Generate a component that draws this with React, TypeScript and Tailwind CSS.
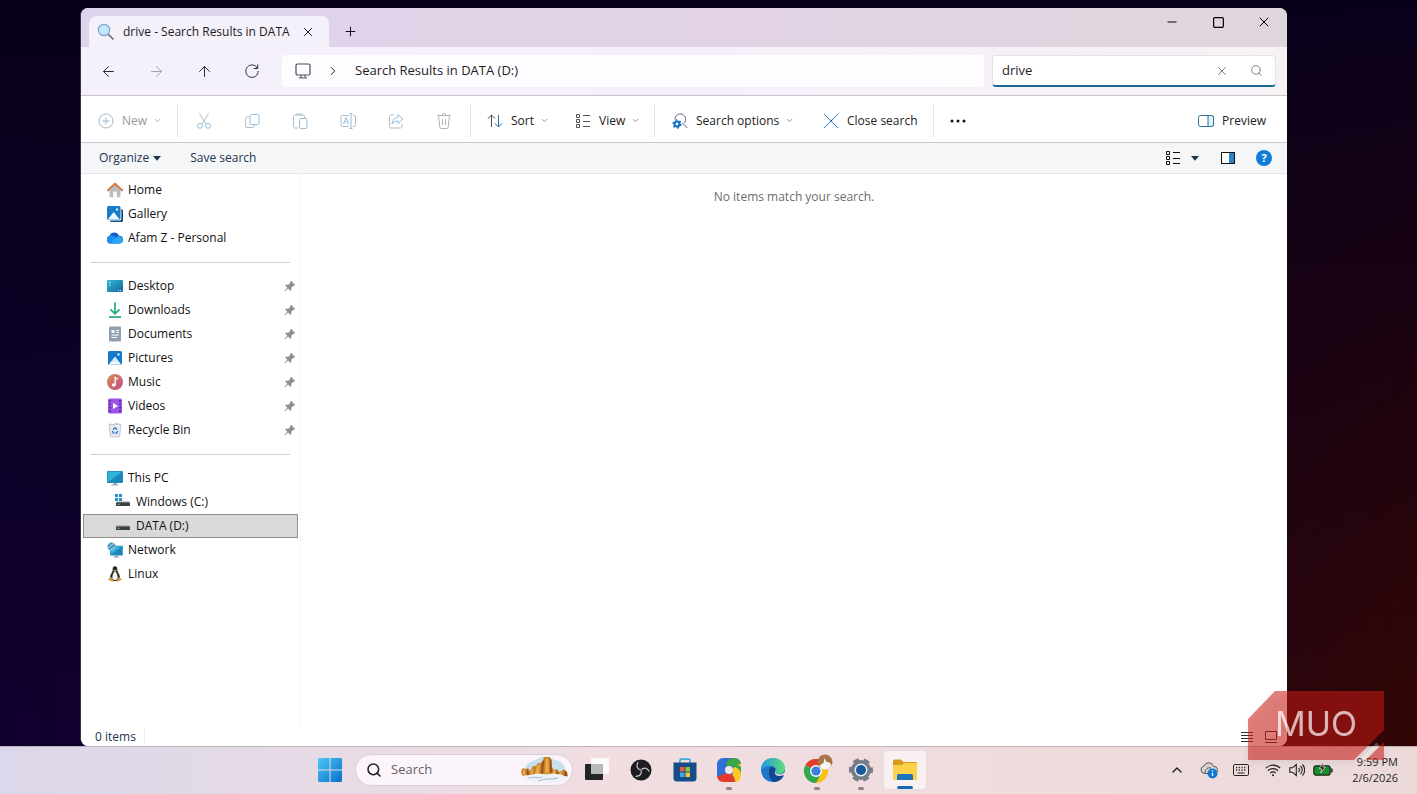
import { useState, type ReactNode } from "react";
import {
  ArrowLeft,
  ArrowRight,
  ArrowUp,
  ChevronDown,
  ChevronRight,
  ChevronUp,
  Minus,
  Plus,
  Search,
  Square,
  X,
} from "lucide-react";

interface NavItem {
  id: string;
  label: string;
  icon: ReactNode;
  pinned?: boolean;
  nested?: boolean;
}

// --- Sidebar icons (16x16) ---
const HomeIcon = () => (
  <svg width="16" height="16" viewBox="0 0 16 16">
    <path d="M2.5 7 8 2l5.5 5v7.5a.8.8 0 0 1-.8.8H9.800V10H6.200v5.300H3.300a.8.8 0 0 1-.8-.8Z" fill="#b9bcc1" />
    <path d="M6.200 9.500h3.600v5.800H6.200Z" fill="#f7f7f7" />
    <path d="M1 8.300 8 1.800l7 6.500" fill="none" stroke="#d0824a" strokeWidth="2.2" strokeLinecap="round" strokeLinejoin="round" />
  </svg>
);

const PicturesIcon = () => (
  <svg width="16" height="16" viewBox="0 0 16 16">
    <rect x="1" y="1" width="14" height="14" rx="1.5" fill="#1579cc" />
    <path d="M1.500 14.800 8 6.800l6.500 8Z" fill="#eef7fd" />
    <path d="M8 6.800 12 11.700l-3 -1-2 1.500-2.500-1Z" fill="#cfe8fa" />
    <circle cx="11.5" cy="4.5" r="1.2" fill="#d9effc" />
  </svg>
);

const GalleryIcon = () => (
  <svg width="16" height="16" viewBox="0 0 16 16">
    <rect x="3" y="3" width="13" height="13" rx="1.5" fill="#134b7c" />
    <rect x="0" y="0" width="14.3" height="14.5" rx="1.5" fill="#fff" />
    <rect x="0" y="0" width="13.5" height="13.7" rx="1.5" fill="#177cc9" />
    <path d="M.8 13.500 6.700 6l6 7.500Z" fill="#eef7fd" />
    <circle cx="10" cy="3.5" r="1.2" fill="#d9effc" />
  </svg>
);

const CloudIcon = () => (
  <svg width="16" height="16" viewBox="0 0 16 16">
    <path d="M4 13.500A4 4 0 0 1 2.600 5.700 5 5 0 0 1 12 5.800a3.800 3.800 0 0 1 .4 7.700Z" fill="#1762cf" />
    <path d="M4 13.500A4 4 0 0 1 2.600 5.700c2-.8 4.400 0 5.900 1.500L12 13.500Z" fill="#1f8fec" />
    <path d="M5.500 13.500c-1-3 2-6.500 4-6 1-1.500 3-1.500 4.500-.7A3.600 3.600 0 0 1 12.500 13.500Z" fill="#2ba6f6" />
  </svg>
);

const DesktopIcon = () => (
  <svg width="16" height="16" viewBox="0 0 16 16">
    <defs>
      <linearGradient id="desk" x1="0" y1="0" x2="1" y2="1">
        <stop offset="0" stopColor="#2fb7cf" />
        <stop offset="1" stopColor="#13689f" />
      </linearGradient>
    </defs>
    <rect x="0" y="2" width="16" height="12" rx="1.2" fill="url(#desk)" />
    <path d="M2 4.500h1.500M2 7h1.500M11 12.500h1M13 12.500h1" stroke="#d5f4fa" strokeWidth="1.2" />
  </svg>
);

const DownloadsIcon = () => (
  <svg width="16" height="16" viewBox="0 0 16 16" fill="none" stroke="#25a884" strokeWidth="1.7">
    <path d="M8 .5v11M3.500 7.300 8 11.800l4.500-4.500" />
    <path d="M2 15h12" />
  </svg>
);

const DocumentsIcon = () => (
  <svg width="16" height="16" viewBox="0 0 16 16">
    <rect x="2" y="0.5" width="12" height="15" rx="1.2" fill="#8f9fb0" />
    <path d="M4.500 4H7.500v3h-3Z" fill="#fff" />
    <path d="M9 4.500h3M9 6.500h3M4.500 9H12M4.500 11.500H10" stroke="#fff" strokeWidth="1" />
  </svg>
);

const MusicIcon = () => (
  <svg width="16" height="16" viewBox="0 0 16 16">
    <defs>
      <linearGradient id="music" x1="0" y1="0" x2="1" y2="1">
        <stop offset="0" stopColor="#e08a4f" />
        <stop offset="1" stopColor="#b8508a" />
      </linearGradient>
    </defs>
    <circle cx="8" cy="8" r="8" fill="url(#music)" />
    <ellipse cx="6.8" cy="11" rx="1.9" ry="1.7" fill="#fff" />
    <path d="M8.200 11V3.500l2.600 1.700" fill="none" stroke="#fff" strokeWidth="1.3" />
  </svg>
);

const VideosIcon = () => (
  <svg width="16" height="16" viewBox="0 0 16 16">
    <rect x="1" y="0.5" width="14" height="15" rx="1.5" fill="#9a55e6" />
    <path d="M3 2v12M13 2v12" stroke="#42207e" strokeWidth="1.5" strokeDasharray="1.7 1.7" />
    <path d="M6 5v6l5-3Z" fill="#fff" />
  </svg>
);

const RecycleIcon = () => (
  <svg width="16" height="16" viewBox="0 0 16 16">
    <path d="M2 2.500h12l-1.500 12.300H3.500Z" fill="#e4eaef" stroke="#b5c0ca" strokeWidth=".8" />
    <path d="M3 1.500 6 3l3-2 4 1.500" fill="none" stroke="#c4cdd6" />
    <path d="M6 7.500 8 5.800l2 1.700M10.700 9l-1.200 2.200H8.300M5.300 9l1.200 2.200h.8" fill="none" stroke="#1b74c8" strokeWidth="1.3" />
  </svg>
);

const MonitorShape = () => (
  <>
    <rect x="0" y="1" width="16" height="12" rx="1" fill="#1b87bd" />
    <path d="M.7 1.700h14.600L.7 12.300Z" fill="#2fb4da" />
    <path d="M6.500 13h3v1.500h-3ZM4.500 14.500h7v1h-7Z" fill="#8ba0ae" />
  </>
);

const ThisPCIcon = () => (
  <svg width="16" height="16" viewBox="0 0 16 16">
    <MonitorShape />
  </svg>
);

const NetworkIcon = () => (
  <svg width="16" height="16" viewBox="0 0 16 16">
    <g transform="translate(3 3) scale(.8)">
      <MonitorShape />
    </g>
    <circle cx="4.5" cy="4.5" r="4.2" fill="#7dbbdd" />
    <path d="M1 3.500c2 .5 2-2 4-2.500M2 7c1-2 3-1 4-3l2-1" stroke="#27759f" fill="none" />
  </svg>
);

const DriveIcon = ({ windows }: { windows?: boolean }) => (
  <svg width="16" height="16" viewBox="0 0 16 16">
    {windows && (
      <path d="M0 0h3v3H0ZM4 0h3v3H4ZM0 4h3v3H0ZM4 4h3v3H4Z" fill="#2590c9" />
    )}
    <path d="M2 7.500h12l1 1.500H1Z" fill="#9a9e9e" />
    <rect x="1" y="8.5" width="14" height="3.5" rx=".4" fill="#3c4140" />
    <path d="M2.500 10.300h2" stroke="#56d98a" />
  </svg>
);

const LinuxIcon = () => (
  <svg width="16" height="16" viewBox="0 0 16 16">
    <path d="M8 .3c-2.200 0-2.400 2-2.300 4C5.500 6.500 3 8.500 3 12l2 3h6l2-3c0-3.500-2.500-5.500-2.700-7.700C10.400 2.200 10.200.3 8 .3Z" fill="#29292b" />
    <path d="M8 5.500c-1.700 1-3 4-2.600 7.500L8 14.200l2.600-1.200C11 9.500 9.700 6.500 8 5.500Z" fill="#f2f2f2" />
    <path d="M6.500 4.500 8 6l1.500-1.500L8 3.800Z" fill="#e3b33a" />
    <path d="M1 13.500 4 11l2.700 3.500-1.200 1.300ZM15 13.500 12 11l-2.700 3.500 1.200 1.300Z" fill="#c59c35" />
  </svg>
);

const PinIcon = () => (
  <svg width="12" height="12" viewBox="0 0 12 12" fill="#8a9297">
    <path d="M7 .8 11.200 5l-1 .9-.8-.2-2.100 2.100.1 2.200-1 .9L4.100 8.600.9 11.500l-.5-.5 2.900-3.200L1.100 5.600l.9-1 2.200.1 2.100-2.100-.2-.9Z" />
  </svg>
);

// --- Command bar icons ---
const iconProps = { width: 16, height: 16, viewBox: "0 0 16 16", fill: "none" };

const NewIcon = () => (
  <svg {...iconProps} stroke="#a9b4bd">
    <circle cx="8" cy="8" r="7" />
    <path d="M8 4.500v7M4.500 8h7" stroke="#8fbbdc" />
  </svg>
);

const CutIcon = () => (
  <svg {...iconProps}>
    <path d="m3.500 .5 6.500 10.500M12.500.5 6 11" stroke="#b5b9bc" />
    <circle cx="4" cy="12.8" r="2.5" stroke="#93bfdf" />
    <circle cx="12" cy="12.8" r="2.5" stroke="#93bfdf" />
  </svg>
);

const CopyIcon = () => (
  <svg {...iconProps}>
    <path d="M5 4H3a1.500 1.500 0 0 0-1.500 1.500V13A1.500 1.500 0 0 0 3 14.500h5.500A1.500 1.500 0 0 0 10 13v-1" stroke="#b5bcc2" />
    <rect x="6" y="1.5" width="9" height="10" rx="1.5" stroke="#93bfdf" />
  </svg>
);

const PasteIcon = () => (
  <svg {...iconProps}>
    <path d="M6 15H3a1.500 1.500 0 0 1-1.500-1.500v-10A1.500 1.500 0 0 1 3 2h8a1.500 1.500 0 0 1 1.500 1.500V5M4.500 2.500V1h5v1.500" stroke="#b5bcc2" />
    <rect x="7.5" y="5.5" width="7.5" height="10" rx="1.2" stroke="#93bfdf" />
  </svg>
);

const RenameIcon = () => (
  <svg {...iconProps}>
    <path d="M9 2.500H2.500A1.500 1.500 0 0 0 1 4v8a1.500 1.500 0 0 0 1.500 1.500H9M13 2.500h1A1.500 1.500 0 0 1 15.500 4v8a1.500 1.500 0 0 1-1.500 1.500h-1" stroke="#b5bcc2" />
    <path d="m3.500 11 2.500-6.500L8.500 11M4.500 9h3M11 .8v14.400M9.500.5h3M9.500 15.500h3" stroke="#93bfdf" />
  </svg>
);

const ShareIcon = () => (
  <svg {...iconProps}>
    <path d="M6 2H3A1.500 1.500 0 0 0 1.500 3.500v10A1.500 1.500 0 0 0 3 15h9.500a1.500 1.500 0 0 0 1.500-1.500V11" stroke="#b5bcc2" />
    <path d="M10 1.500 15 6l-5 4.500V8c-3 0-4.500 1-6 3 .3-4 2.500-6.500 6-6.800Z" stroke="#93bfdf" strokeLinejoin="round" />
  </svg>
);

const DeleteIcon = () => (
  <svg {...iconProps} stroke="#b1b5b8">
    <path d="M1 2.500h14M6 2.500a2 2 0 0 1 4 0M2.500 2.500l1.300 11.700a1.300 1.300 0 0 0 1.300 1.300h5.800a1.300 1.300 0 0 0 1.300-1.300L13.500 2.500M6.500 6v6M9.500 6v6" />
  </svg>
);

const SortIcon = () => (
  <svg {...iconProps}>
    <path d="M4.500 14V2M.8 5.700 4.500 2l3.700 3.700" stroke="#48525b" />
    <path d="M11.500 2v12M7.800 10.300l3.700 3.700 3.700-3.700" stroke="#2572b8" />
  </svg>
);

const ListIcon = ({ color }: { color: string }) => (
  <svg {...iconProps} stroke={color}>
    <path d="M1.500 1.500h3v3h-3ZM1.500 6.500h3v3h-3ZM1.500 11.500h3v3h-3ZM8 2.500h7M8 8.500h7M8 13.500h7" />
  </svg>
);

const SearchOptionsIcon = () => (
  <svg {...iconProps}>
    <path d="M3 6.500a5.300 5.300 0 1 1 8.800 3.700M10.500 10l4.700 5" stroke="#59626b" />
    <circle cx="5" cy="11" r="2.5" stroke="#1272c4" strokeWidth="2.2" />
    <circle cx="5" cy="11" r="3.9" stroke="#1272c4" strokeWidth="1.5" strokeDasharray="2 2.08" />
  </svg>
);

const CloseSearchIcon = () => (
  <svg {...iconProps} stroke="#2b7cc4">
    <path d="m1 1 14 14M15 1 1 15" />
  </svg>
);

const PreviewIcon = () => (
  <svg {...iconProps} stroke="#2f7497">
    <rect x=".5" y="2.5" width="15" height="11" rx="2" fill="#fff" />
    <path d="M10 2.500h3.500a2 2 0 0 1 2 2v7a2 2 0 0 1-2 2H10Z" fill="#d8f3fb" />
  </svg>
);

const RefreshIcon = () => (
  <svg {...iconProps} stroke="#2b2930">
    <path d="M13.500 5.300A6.200 6.200 0 1 0 14.200 8M13.700 1.500v4h-4" />
  </svg>
);

const PcIcon = () => (
  <svg {...iconProps} stroke="#4a4850">
    <rect x="1" y="1" width="14" height="11" rx="1.5" strokeWidth="1.2" />
    <path d="M6 12v2.500M10 12v2.500M3.800 14.900h8.400" />
  </svg>
);

const MagnifierIcon = () => (
  <svg width="18" height="18" viewBox="0 0 18 18" className="shrink-0">
    <path d="m10.500 10.500 6 6" stroke="#6b7078" strokeWidth="1.7" />
    <circle cx="7" cy="7" r="5.7" fill="#c6e6fa" stroke="#7ba9cc" strokeWidth="1.2" />
  </svg>
);

const CaretIcon = () => (
  <svg width="8" height="5" viewBox="0 0 8 5" fill="#1e3551">
    <path d="M0 0h8L4 4.800Z" />
  </svg>
);

// --- Taskbar icons ---
const StartIcon = () => (
  <svg width="24" height="24" viewBox="0 0 24 24">
    <defs>
      <linearGradient id="start" x1="0" y1="0" x2="1" y2="1">
        <stop offset="0" stopColor="#4cc6f5" />
        <stop offset="1" stopColor="#0670c9" />
      </linearGradient>
    </defs>
    <path d="M1.500 0h10v11.500H0v-10A1.500 1.500 0 0 1 1.500 0ZM12.500 0h10A1.500 1.500 0 0 1 24 1.500v10H12.500ZM0 12.500h11.500V24h-10A1.500 1.500 0 0 1 0 22.500ZM12.500 12.500H24v10a1.500 1.500 0 0 1-1.500 1.500h-10Z" fill="url(#start)" />
  </svg>
);

const CanyonIcon = () => (
  <svg width="50" height="28" viewBox="0 0 50 28">
    <path d="M5 12C7 5 14 6 17 3c6-4 14-3 17 1 6 0 10 4 11 9l-4 8H7Z" fill="#c6e0ec" />
    <path d="M2 19 1 15l2-3 3 1 2-1 2 3 3-5 3 0 2-3 3 0 2-3 1-3 6 0 2 4 0 6 2 3 3-1 2 3 3-1 2-2 3 3 1 4-6 4H8Z" fill="#c9822c" />
    <path d="m17 10 3-2-1 10-4 1ZM26 2l2 1 1 13-4 2ZM3 14l2-1v6H3ZM11 15l2-3 0 7-3 1ZM34 14l2 2-1 3-3 0ZM40 17l2-1 0 4-3 0Z" fill="#eda945" />
    <path d="m22 6 2-2-1 13-2 1ZM30 3l1 0 1 13-2 1ZM45 15l2 1v4h-3ZM7 14l1-1 1 6H7ZM37 15l1 0 0 5-2-1Z" fill="#8d4e1d" />
    <path d="M1 21c5-3 9-1 14-3 4-1 9 1 14 0 6-1 12 0 19 3-4 5-14 6-22 6C15 27 6 26 1 21Z" fill="#eef3f8" />
    <path d="M8 22c6-2 10 1 15-1M18 25c6-3 11-1 20-3" stroke="#b3c5d6" strokeWidth="1.3" fill="none" />
  </svg>
);

const TaskViewIcon = () => (
  <svg width="24" height="24" viewBox="0 0 24 24">
    <rect x="0" y="6" width="18" height="16" rx="1" fill="#242426" />
    <rect x="6" y="0" width="18" height="16" rx="1" fill="#fff" opacity=".8" />
    <path d="M6 6h12v10H6Z" fill="#b9b8ba" />
  </svg>
);

const ObsIcon = () => (
  <svg width="22" height="22" viewBox="0 0 22 22">
    <circle cx="11" cy="11" r="10.500" fill="#1d1c20" />
    <g fill="none" stroke="#c9c9cc" strokeWidth="1.2" strokeLinecap="round">
      <path d="M11 11c-4-1-5-4-3-7.500" />
      <path d="M11 11c-4-1-5-4-3-7.500" transform="rotate(120 11 11)" />
      <path d="M11 11c-4-1-5-4-3-7.500" transform="rotate(240 11 11)" />
    </g>
    <circle cx="11" cy="11" r="1.5" fill="#77777c" />
  </svg>
);

const StoreIcon = () => (
  <svg width="24" height="24" viewBox="0 0 24 24">
    <path d="M7 6V2.500A1.300 1.300 0 0 1 8.300 1.200h7.400A1.300 1.300 0 0 1 17 2.500V6" fill="none" stroke="#36b0dc" strokeWidth="1.7" />
    <path d="M.5 4.500h23V20a3.500 3.500 0 0 1-3.500 3.500H4A3.500 3.500 0 0 1 .5 20Z" fill="#174d86" />
    <path d="M7 9h4.500v4.500H7Z" fill="#ea5b35" />
    <path d="M12.500 9H17v4.500h-4.500Z" fill="#8cc63e" />
    <path d="M7 14.500h4.500V19H7Z" fill="#36a9e8" />
    <path d="M12.500 14.500H17V19h-4.500Z" fill="#fbc231" />
  </svg>
);

const SwirlIcon = () => {
  const blade = "M6 0H18a6 6 0 0 1 6 6v9C22 10 18 8 12 8 8 8 6 4 6 0Z";
  return (
    <svg width="24" height="24" viewBox="0 0 24 24">
      <rect x="1" y="1" width="22" height="22" rx="8" fill="#2f6fd6" />
      <path d={blade} fill="#3aa648" />
      <path d={blade} fill="#fbc920" transform="rotate(90 12 12)" />
      <path d={blade} fill="#e33a2d" transform="rotate(180 12 12)" />
      <path d={blade} fill="#2f6fd6" transform="rotate(270 12 12)" />
      <path d="M12 8c6 0 10 2 12 7V9L14 2Z" fill="#3aa648" />
      <circle cx="12" cy="12" r="4" fill="#f3e4ea" />
    </svg>
  );
};

const EdgeIcon = () => (
  <svg width="24" height="24" viewBox="0 0 24 24">
    <defs>
      <linearGradient id="edge" x1="0" y1="0" x2="1" y2="0">
        <stop offset="0" stopColor="#1f9be0" />
        <stop offset="1" stopColor="#5fdc7a" />
      </linearGradient>
    </defs>
    <circle cx="12" cy="12" r="12" fill="#1c77cc" />
    <path d="M0 12C0 5 5 0 12 0c7 0 12 5 12 10 0 4-3 6-6 6-3 0-4-1-4-2 1-1 1-1 1-2 0-2-3-4-6-4-4 0-8 2-9 4Z" fill="url(#edge)" />
    <path d="M8 14c0-3 1-5 4-5 1 0 2 1 2.500 2C13 13 14 17 18 17c3 0 5-1 5.500-1C22 21 17 24 13 24c-3-1-5-5-5-10Z" fill="#12468f" />
    <path d="M15 12c0 1-1 1-1 2s2 2.500 5 2.500c2 0 4-1 5-2.500v3c-1 0-3 1-6 1-4 0-5.500-4-3-6Z" fill="#f1dfe4" />
  </svg>
);

const ChromeIcon = () => (
  <svg width="32" height="32" viewBox="0 0 32 32">
    <circle cx="15" cy="17" r="12" fill="#fbc116" />
    <path d="M15 17 4.600 11A12 12 0 0 1 25.400 11Z" fill="#e33b2e" />
    <path d="M15 17 4.600 11A12 12 0 0 0 15 29l5-9Z" fill="#2da94f" />
    <circle cx="15" cy="17" r="6" fill="#fff" />
    <circle cx="15" cy="17" r="4.6" fill="#3a7ee4" />
    <circle cx="24" cy="8" r="7.5" fill="#a9744a" />
    <path d="M18.500 12c1-2 3-2 4-3l1-5 2 4c2 0 4 1 5 3-2 6-10 6-12 1Z" fill="#f8f4f0" />
  </svg>
);

const SettingsIcon = () => (
  <svg width="24" height="24" viewBox="0 0 24 24">
    <circle cx="12" cy="12" r="8" fill="none" stroke="#747c85" strokeWidth="4" />
    <circle cx="12" cy="12" r="10.500" fill="none" stroke="#747c85" strokeWidth="3" strokeDasharray="6 5" strokeDashoffset="3" />
    <circle cx="12" cy="12" r="6.5" fill="#e9eff5" />
    <circle cx="12" cy="12" r="5" fill="#17589f" />
  </svg>
);

const FolderIcon = () => (
  <svg width="26" height="24" viewBox="0 0 26 24">
    <path d="M1 4V3a1.500 1.500 0 0 1 1.500-1.500H9L11.500 4H24a1 1 0 0 1 1 1v16H1Z" fill="#d79a1b" />
    <path d="M1 7h9l2-2h13v15.500a1.500 1.500 0 0 1-1.500 1.500h-21A1.500 1.500 0 0 1 1 20.500Z" fill="#fdd04a" />
    <path d="M5 22v-4.500A1.500 1.500 0 0 1 6.500 16h13a1.500 1.500 0 0 1 1.500 1.500V22Z" fill="#1b73bd" />
  </svg>
);

const OneDriveTrayIcon = () => (
  <svg width="18" height="18" viewBox="0 0 18 18">
    <path d="M4.500 12.500A3.800 3.800 0 0 1 4 5a5 5 0 0 1 9.500.5 3.500 3.500 0 0 1 1 7Z" fill="#d6d2d2" stroke="#5a5658" />
    <path d="M5 12c0-4 3-6 6-5" fill="none" stroke="#5a5658" />
    <circle cx="12.500" cy="12.500" r="5" fill="#1278cf" />
    <path d="M12.500 11.800v3.200M12.500 9.500v1.200" stroke="#fff" strokeWidth="1.3" />
  </svg>
);

const KeyboardIcon = () => (
  <svg {...iconProps} stroke="#222">
    <rect x=".5" y="2.5" width="15" height="11" rx="1.2" />
    <path d="M3 5.500h10M3 8h10" strokeDasharray="1.200 1.500" strokeWidth="1.3" />
    <path d="M4.500 11h7" />
  </svg>
);

const WifiIcon = () => (
  <svg {...iconProps} stroke="#1f1f1f" strokeWidth="1.2">
    <path d="M.8 6.200a10.200 10.200 0 0 1 14.400 0M3 8.700a7.100 7.100 0 0 1 10 0M5.300 11.100a3.900 3.900 0 0 1 5.400 0" />
    <circle cx="8" cy="13.3" r="1" fill="#1f1f1f" stroke="none" />
  </svg>
);

const VolumeIcon = () => (
  <svg {...iconProps} stroke="#1f1f1f" strokeWidth="1.1">
    <path d="M.8 5.800h2.700L7.300 2.500v11L3.500 10.200H.8ZM9.500 5.800a3 3 0 0 1 0 4.400M11.500 4a5.500 5.500 0 0 1 0 8M13.500 2.500a8 8 0 0 1 0 11" />
  </svg>
);

const BatteryIcon = () => (
  <svg width="20" height="16" viewBox="0 0 20 16">
    <rect x=".8" y="3.8" width="16.4" height="9.4" rx="2.5" fill="#1d8a2e" stroke="#1c2b1e" strokeWidth="1.2" />
    <path d="M18.300 6.800c1 .3 1 3 0 3.500" stroke="#1c2b1e" strokeWidth="1.5" fill="none" />
    <path d="M10.500 0 6 6.800h2.700L7.800 11l4.700-6H9.800Z" fill="#1c2b1e" stroke="#f3dede" strokeWidth=".7" />
  </svg>
);

const sections: NavItem[][] = [
  [
    { id: "home", label: "Home", icon: <HomeIcon /> },
    { id: "gallery", label: "Gallery", icon: <GalleryIcon /> },
    { id: "onedrive", label: "Afam Z - Personal", icon: <CloudIcon /> },
  ],
  [
    { id: "desktop", label: "Desktop", icon: <DesktopIcon />, pinned: true },
    { id: "downloads", label: "Downloads", icon: <DownloadsIcon />, pinned: true },
    { id: "documents", label: "Documents", icon: <DocumentsIcon />, pinned: true },
    { id: "pictures", label: "Pictures", icon: <PicturesIcon />, pinned: true },
    { id: "music", label: "Music", icon: <MusicIcon />, pinned: true },
    { id: "videos", label: "Videos", icon: <VideosIcon />, pinned: true },
    { id: "recycle", label: "Recycle Bin", icon: <RecycleIcon />, pinned: true },
  ],
  [
    { id: "pc", label: "This PC", icon: <ThisPCIcon /> },
    { id: "c", label: "Windows (C:)", icon: <DriveIcon windows />, nested: true },
    { id: "d", label: "DATA (D:)", icon: <DriveIcon />, nested: true },
    { id: "network", label: "Network", icon: <NetworkIcon /> },
    { id: "linux", label: "Linux", icon: <LinuxIcon /> },
  ],
];

const fileActions = [
  { label: "Cut", icon: <CutIcon /> },
  { label: "Copy", icon: <CopyIcon /> },
  { label: "Paste", icon: <PasteIcon /> },
  { label: "Rename", icon: <RenameIcon /> },
  { label: "Share", icon: <ShareIcon /> },
  { label: "Delete", icon: <DeleteIcon /> },
];

const taskbarApps = [
  { label: "Task View", icon: <TaskViewIcon /> },
  { label: "OBS Studio", icon: <ObsIcon /> },
  { label: "Microsoft Store", icon: <StoreIcon /> },
  { label: "Browser", icon: <SwirlIcon />, running: true },
  { label: "Microsoft Edge", icon: <EdgeIcon /> },
  { label: "Google Chrome", icon: <ChromeIcon />, running: true },
  { label: "Settings", icon: <SettingsIcon />, running: true },
  { label: "File Explorer", icon: <FolderIcon />, active: true },
];

const Divider = () => <div className="h-8 w-px shrink-0 bg-[#e4e4e6]" />;

function TitleBar() {
  return (
    <div className="flex h-[39px] items-start justify-between bg-linear-to-r from-[#dcd4ec] via-[#e2d3e6] to-[#dfd6dc]">
      <div className="flex items-center pl-2 pt-2">
        <div className="flex h-[31px] w-[240px] items-center rounded-t-lg bg-[#f5f1fb] pl-2 pr-3.5">
          <MagnifierIcon />
          <span className="ml-2 whitespace-nowrap text-xs font-medium text-[#1d1b22]">
            drive - Search Results in DATA
          </span>
          <button aria-label="Close tab" className="ml-auto">
            <X size={14} strokeWidth={1.5} />
          </button>
        </div>
        <button aria-label="New tab" className="ml-3.5">
          <Plus size={15} strokeWidth={1.5} />
        </button>
      </div>
      <div className="flex text-black">
        <button aria-label="Minimize" className="flex h-7 w-[46px] items-center justify-center">
          <Minus size={14} strokeWidth={1.7} />
        </button>
        <button aria-label="Maximize" className="flex h-7 w-[46px] items-center justify-center">
          <Square size={13} strokeWidth={2.2} />
        </button>
        <button aria-label="Close" className="flex h-7 w-[46px] items-center justify-center">
          <X size={16} strokeWidth={1.5} />
        </button>
      </div>
    </div>
  );
}

function AddressRow() {
  const [query, setQuery] = useState("drive");

  return (
    <div className="flex h-[49px] items-center border-b border-[#cbc2d3] bg-linear-to-r from-[#f4f1fb] via-[#f6effa] to-[#f7f2f4] pl-[3px] pr-[11px]">
      <button aria-label="Back" className="flex w-12 justify-center text-[#2b2930]">
        <ArrowLeft size={17} strokeWidth={1.4} />
      </button>
      <button aria-label="Forward" className="flex w-12 justify-center text-[#a5a1aa]">
        <ArrowRight size={17} strokeWidth={1.4} />
      </button>
      <button aria-label="Up" className="flex w-12 justify-center text-[#2b2930]">
        <ArrowUp size={17} strokeWidth={1.4} />
      </button>
      <button aria-label="Refresh" className="flex w-12 justify-center">
        <RefreshIcon />
      </button>
      <div className="ml-1.5 flex h-8 flex-1 items-center rounded bg-[#fdfcfe] pl-[13px] text-[13px] text-[#1f1d24]">
        <PcIcon />
        <ChevronRight size={14} strokeWidth={1.7} className="mx-[15px]" />
        <span>Search Results in DATA (D:)</span>
      </div>
      <div className="ml-2 flex h-8 w-[284px] items-center rounded border border-b-2 border-[#e5dfe8] border-b-[#1b6a94] bg-white pl-[9px] pr-3">
        <input
          aria-label="Search"
          value={query}
          onChange={(e) => setQuery(e.target.value)}
          className="min-w-0 flex-1 text-[13px] text-[#1f1d24] outline-none"
        />
        <button aria-label="Clear search" onClick={() => setQuery("")} className="mr-[21px] text-[#6b6b6f]">
          <X size={14} strokeWidth={1.5} />
        </button>
        <button aria-label="Run search" className="text-[#7b7b80]">
          <Search size={13} strokeWidth={1.7} />
        </button>
      </div>
    </div>
  );
}

function CommandBar() {
  return (
    <div className="flex h-[47px] items-center border-b border-[#cdc5d0] bg-white pt-[3px] text-xs text-[#222]">
      <button className="flex w-24 items-center pl-[17px] text-[#9a9a9d]">
        <NewIcon />
        <span className="ml-2 mr-1.5">New</span>
        <ChevronDown size={9} />
      </button>
      <Divider />
      <div className="flex px-[2px]">
        {fileActions.map((action) => (
          <button key={action.label} aria-label={action.label} className="flex w-12 justify-center">
            {action.icon}
          </button>
        ))}
      </div>
      <Divider />
      <button className="flex w-[88px] items-center pl-4">
        <SortIcon />
        <span className="ml-2 mr-1.5">Sort</span>
        <ChevronDown size={9} className="text-[#777]" />
      </button>
      <button className="flex w-[95px] items-center pl-4">
        <ListIcon color="#4d5257" />
        <span className="ml-2 mr-1.5">View</span>
        <ChevronDown size={9} className="text-[#777]" />
      </button>
      <Divider />
      <button className="flex w-[151px] items-center pl-[17px]">
        <SearchOptionsIcon />
        <span className="ml-2 mr-1.5">Search options</span>
        <ChevronDown size={9} className="text-[#777]" />
      </button>
      <button className="flex w-[127px] items-center pl-[17px]">
        <CloseSearchIcon />
        <span className="ml-2">Close search</span>
      </button>
      <Divider />
      <button aria-label="See more" className="flex w-12 justify-center">
        <svg width="16" height="4" viewBox="0 0 16 4" fill="#111">
          <circle cx="2" cy="2" r="1.5" />
          <circle cx="8" cy="2" r="1.5" />
          <circle cx="14" cy="2" r="1.5" />
        </svg>
      </button>
      <button className="ml-auto mr-[21px] flex items-center gap-2">
        <PreviewIcon />
        <span>Preview</span>
      </button>
    </div>
  );
}

function OrganizeBar() {
  return (
    <div className="flex h-[31px] items-center border-b border-[#e4e7ea] bg-[#f4f6f8] pl-[18px] pr-[15px] text-xs text-[#1e3551]">
      <button className="flex items-center gap-1">
        Organize
        <CaretIcon />
      </button>
      <button className="ml-[29px]">Save search</button>
      <div className="ml-auto flex items-center">
        <button aria-label="Change view" className="flex items-center gap-2.5">
          <ListIcon color="#111" />
          <CaretIcon />
        </button>
        <button aria-label="Preview pane" className="ml-[22px]">
          <svg width="14" height="12" viewBox="0 0 14 12">
            <rect x=".5" y=".5" width="13" height="11" fill="#fff" stroke="#111" />
            <path d="M8 1h5v10H8Z" fill="#2d85c9" />
          </svg>
        </button>
        <button
          aria-label="Help"
          className="ml-[21px] flex size-4 items-center justify-center rounded-full bg-[#127cd6] text-[11px] font-bold text-white"
        >
          ?
        </button>
      </div>
    </div>
  );
}

function Sidebar() {
  const [selected, setSelected] = useState("d");

  return (
    <nav className="w-[220px] shrink-0 border-r border-[#f6f6f7] pt-1 text-xs text-[#111]">
      {sections.map((items, index) => (
        <div key={items[0].id}>
          {index > 0 && (
            <div className="flex h-6 items-center px-2.5">
              <hr className="w-full border-[#cfcfd1]" />
            </div>
          )}
          {items.map((item) => (
            <button
              key={item.id}
              onClick={() => setSelected(item.id)}
              className={`ml-0.5 flex h-6 w-[215px] items-center border pr-px ${
                item.nested ? "pl-[31px]" : "pl-[23px]"
              } ${selected === item.id ? "border-[#8f8f8f] bg-[#d9d9d9]" : "border-transparent"}`}
            >
              {item.icon}
              <span className="ml-[5px] flex-1 text-left">{item.label}</span>
              {item.pinned && <PinIcon />}
            </button>
          ))}
        </div>
      ))}
    </nav>
  );
}

function StatusBar() {
  return (
    <div className="flex h-[18px] items-center bg-white pl-3.5 pr-2.5 text-xs text-[#24364d]">
      <span className="border-r border-[#eeeeef] pr-2">0 items</span>
      <div className="ml-auto flex items-center gap-3">
        <button aria-label="Details view">
          <svg width="12" height="12" viewBox="0 0 12 12" stroke="#333">
            <path d="M0 1.500h12M0 4.500h12M0 7.500h12M0 10.500h12" />
          </svg>
        </button>
        <button aria-label="Large icons view">
          <svg width="12" height="12" viewBox="0 0 12 12" fill="none" stroke="#333">
            <path d="M.5.5h11v8H.5ZM0 11.500h12" />
          </svg>
        </button>
      </div>
    </div>
  );
}

function Taskbar() {
  return (
    <footer className="flex h-12 shrink-0 items-center border-t border-[#bcb3ba] bg-linear-to-r from-[#dcd7ea] via-[#f1dee0] via-45% to-[#ecdadb] pl-[308px] pr-[19px] pb-px text-[#1f1f1f]">
      <button aria-label="Start" className="flex w-11 justify-center">
        <StartIcon />
      </button>
      <label className="ml-[3px] mr-0.5 flex h-8 w-[218px] items-center rounded-full border border-[#dccfdc] bg-[#fbf4fa] pl-2.5 pr-0.5">
        <Search size={16} strokeWidth={2.3} className="shrink-0" />
        <input
          aria-label="Search Windows"
          placeholder="Search"
          className="ml-[9px] min-w-0 flex-1 text-[13px] outline-none placeholder:text-[#66616a]"
        />
        <CanyonIcon />
      </label>
      {taskbarApps.map((app) => (
        <button
          key={app.label}
          aria-label={app.label}
          className={`relative flex h-10 w-11 shrink-0 items-center justify-center ${
            app.active ? "rounded border border-[#e9dcdf] bg-[#f9f0f2]" : ""
          }`}
        >
          {app.icon}
          {app.running && (
            <span className="absolute bottom-0 h-[3px] w-1.5 rounded-full bg-[#8a8287]" />
          )}
          {app.active && (
            <span className="absolute bottom-0 h-[3px] w-4 rounded-full bg-[#1a67b3]" />
          )}
        </button>
      ))}
      <div className="ml-auto flex items-center">
        <button aria-label="Show hidden icons" className="flex w-8 justify-center">
          <ChevronUp size={16} strokeWidth={2} />
        </button>
        <button aria-label="OneDrive" className="flex w-8 justify-center">
          <OneDriveTrayIcon />
        </button>
        <button aria-label="Touch keyboard" className="flex w-8 justify-center">
          <KeyboardIcon />
        </button>
        <button aria-label="Network, volume and battery" className="ml-2 flex items-center gap-2">
          <WifiIcon />
          <VolumeIcon />
          <BatteryIcon />
        </button>
        <button className="ml-3 w-[53px] whitespace-nowrap text-right text-[11px] leading-4">
          <span className="block">9:59 PM</span>
          <span className="block">2/6/2026</span>
        </button>
      </div>
    </footer>
  );
}

// Translucent channel logo over the bottom-right corner
function Watermark() {
  return (
    <svg
      width="138"
      height="72"
      viewBox="0 0 138 72"
      className="pointer-events-none absolute bottom-8 right-8 drop-shadow-md"
    >
      <path d="M28 1H137V40L107 70H1V29Z" fill="#cc1a14" opacity=".55" />
      <path d="M137 52V70H119Z" fill="#cc1a14" opacity=".55" />
      <path d="m115 70 16-16" stroke="#fff" strokeWidth="4" opacity=".25" />
      <text x="28" y="46" fill="#fff" opacity=".7" fontSize="34" className="font-['Inter'] font-normal">
        MUO
      </text>
    </svg>
  );
}

export default function App() {
  return (
    <div className="relative flex h-screen flex-col overflow-hidden bg-linear-to-r from-[#100030] via-[#150020] to-[#330604] font-['Open_Sans','Noto_Sans',sans-serif]">
      <div className="flex min-h-0 flex-1 bg-linear-to-b from-[#08001a] to-transparent pl-20 pr-[130px] pt-2">
        <main className="flex min-w-0 flex-1 flex-col overflow-hidden rounded-lg border-l border-[#3a2f4a] bg-white">
          <TitleBar />
          <AddressRow />
          <CommandBar />
          <OrganizeBar />
          <div className="flex min-h-0 flex-1">
            <Sidebar />
            <section className="flex-1 pt-[15px] text-center text-xs text-[#6d6d6d]">
              <p>No items match your search.</p>
            </section>
          </div>
          <StatusBar />
        </main>
      </div>
      <Taskbar />
      <Watermark />
    </div>
  );
}
